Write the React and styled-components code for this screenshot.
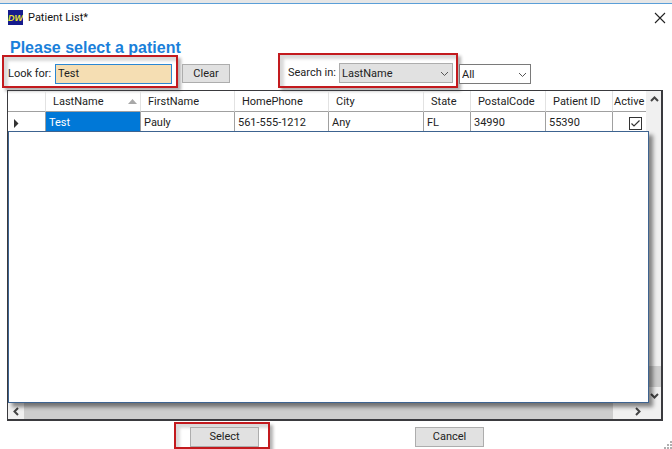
import React from "react";
import styled, { createGlobalStyle, css } from "styled-components";

const GlobalStyle = createGlobalStyle`
  *, *::before, *::after { box-sizing: border-box; }
  body { margin: 0; background: #fff; }
  body, button, input, select {
    font-family: Roboto, "Liberation Sans", sans-serif;
    font-size: 11px;
    line-height: 14px;
    color: #222;
  }
`;

const Dialog = styled.main`
  display: flex;
  flex-direction: column;
  height: 100vh;
  min-width: 600px;
  overflow: hidden;
  position: relative;
  background: #fff;
  border-top: 3px solid #e6e6e6;
`;

const TitleBar = styled.header`
  display: flex;
  align-items: center;
  gap: 5px;
  height: 30px;
  padding: 0 6px 2px 8px;
  border-top: 1px solid #5a9fd8;
`;

const AppIcon = styled.svg`
  width: 15px;
  height: 15px;
  flex: none;
`;

const Title = styled.span`
  flex: 1;
  color: #111;
`;

const CloseButton = styled.button`
  display: flex;
  width: 12px;
  height: 12px;
  padding: 0;
  border: 0;
  background: none;
`;

const Heading = styled.h1`
  margin: 6px 10px 0;
  font: bold 16px/18px "Liberation Sans", Arial, sans-serif;
  color: #1a80da;
`;

const Toolbar = styled.form`
  display: flex;
  align-items: flex-end;
  flex: none;
  height: 31px;
  padding-left: 2px;
`;

const Highlight = styled.div`
  display: flex;
  flex: none;
  align-items: center;
  gap: 2px;
  border: 2px solid #c31a1e;
  box-shadow: 3px 3px 3px rgba(0, 0, 0, 0.3), inset 4px 4px 3px rgba(0, 0, 0, 0.15);
  ${(p) =>
    p.$place === "look" &&
    css`
      width: 176px;
      height: 33px;
      padding: 4px 4px 0 4px;
    `}
  ${(p) =>
    p.$place === "search" &&
    css`
      width: 180px;
      height: 35px;
      margin-left: 48px;
      padding: 5px 3px 0 8px;
    `}
  ${(p) =>
    p.$place === "select" &&
    css`
      width: 96px;
      height: 27px;
      padding: 3px 0 0 14px;
    `}
`;

const Label = styled.label`
  flex: 1;
  white-space: nowrap;
`;

const LookInput = styled.input`
  width: 117px;
  height: 20px;
  padding: 0 2px;
  border: 1px solid #2b87d3;
  border-radius: 0;
  background: #f5deb3;
  outline: none;
`;

const Button = styled.button`
  width: ${(p) => (p.$small ? 48 : 69)}px;
  height: ${(p) => (p.$small ? 19 : 20)}px;
  flex: none;
  padding: 0;
  border: 1px solid #adadad;
  background: #e1e1e1;
`;

const ButtonSlot = styled.div`
  display: flex;
`;

const ClearSlot = styled(ButtonSlot)`
  margin: 0 0 5px 4px;
`;

const Combo = styled.span`
  display: grid;
  align-items: center;
  flex: none;
  width: ${(p) => (p.$wide ? 114 : 72)}px;
  height: 20px;
  margin: ${(p) => (p.$wide ? 0 : "0 0 4px 1px")};

  select, svg { grid-area: 1 / 1; }
  svg { justify-self: end; margin-right: 4px; pointer-events: none; }
`;

const Select = styled.select`
  appearance: none;
  width: 100%;
  height: 20px;
  padding: 1px 2px 0;
  border: 1px solid ${(p) => (p.$shaded ? "#adadad" : "#7a7a7a")};
  border-radius: 0;
  background: ${(p) => (p.$shaded ? "#e1e1e1" : "#fff")};
`;

const GridBox = styled.section`
  position: relative;
  flex: 1;
  min-height: 0;
  display: grid;
  grid-template: minmax(0, 1fr) 16px / minmax(0, 1fr) 15px;
  margin: 2px 9px 0 7px;
  border: solid #3a3a3e;
  border-width: 1px 2px 2px 1px;
`;

const TableView = styled.div`
  overflow: hidden;
`;

const Table = styled.table`
  table-layout: fixed;
  width: 652px;
  border-collapse: separate;
  border-spacing: 0;
`;

const HeadCell = styled.th`
  height: 21px;
  padding: 1px 0 0 ${(p) => (p.$tight ? 1 : 7)}px;
  border-right: 1px solid #e2e2e2;
  border-bottom: 1px solid #a0a0a0;
  font-weight: normal;
  text-align: left;
  white-space: nowrap;
`;

const HeadContent = styled.span`
  display: flex;
  align-items: center;
  justify-content: space-between;
  padding-right: 3px;
`;

const Cell = styled.td`
  height: 20px;
  padding: 2px 0 0 3px;
  border-right: 1px solid #a0a0a0;
  white-space: nowrap;
  ${(p) =>
    p.$selected &&
    css`
      background: #0078d7;
      color: #fff;
    `}
  svg { display: block; margin-left: 2px; }
`;

const Check = styled.input`
  appearance: none;
  display: block;
  width: 13px;
  height: 13px;
  margin: 0 0 0 13px;
  border: 1px solid #333;
  background: #fff;
`;

const CheckCell = styled.span`
  display: grid;
  justify-content: start;

  input, svg { grid-area: 1 / 1; }
  svg { margin: 0 0 0 13px; pointer-events: none; }
`;

const ScrollBar = styled.div`
  display: flex;
  flex-direction: ${(p) => (p.$vertical ? "column" : "row")};
  grid-column: ${(p) => (p.$vertical ? 2 : "1 / 3")};
  background: #f0f0f0;
`;

const ArrowButton = styled.button`
  display: flex;
  align-items: center;
  justify-content: center;
  width: 16px;
  height: 16px;
  flex: none;
  padding: 0;
  border: 0;
  background: none;
`;

const Track = styled.div`
  flex: 1;
  display: flex;
  flex-direction: column;
  justify-content: flex-end;
`;

const Thumb = styled.div`
  background: #cdcdcd;
  ${(p) => (p.$vertical ? "height: 21px;" : "flex: 1; margin-right: 16px;")}
`;

const Corner = styled.div`
  width: 16px;
`;

const Cover = styled.div`
  position: absolute;
  top: 40px;
  right: 12px;
  bottom: 16px;
  left: 0;
  border: 1px solid #3d6390;
  background: #fff;
  box-shadow: 4px 4px 4px rgba(0, 0, 0, 0.45);
`;

const Footer = styled.footer`
  display: flex;
  flex: none;
  justify-content: center;
  align-items: flex-end;
  gap: 145px;
  height: 28px;
  padding-right: 14px;
`;

const CancelSlot = styled(ButtonSlot)`
  margin-bottom: 2px;
`;

const Grip = styled.svg`
  position: absolute;
  right: 0;
  bottom: 0;
  width: 8px;
  height: 8px;
`;

const arrows = {
  up: "M1 6 L4.5 2.5 L8 6",
  down: "M1 3 L4.5 6.5 L8 3",
  left: "M6 1 L2.5 4.5 L6 8",
  right: "M3 1 L6.5 4.5 L3 8",
};

const Arrow = ({ dir, light }) => (
  <svg width="9" height="9" viewBox="0 0 9 9" fill="none" aria-hidden="true">
    <path d={arrows[dir]} stroke={light ? "#555" : "#444"} strokeWidth={light ? 1 : 2} />
  </svg>
);

const columns = [
  ["LastName", 95, "Test"],
  ["FirstName", 94, "Pauly"],
  ["HomePhone", 94, "561-555-1212"],
  ["City", 95, "Any"],
  ["State", 47, "FL"],
  ["PostalCode", 75, "34990"],
  ["Patient ID", 67, "55390"],
];

export default function App() {
  return (
    <>
      <GlobalStyle />
      <Dialog>
        <TitleBar>
          <AppIcon viewBox="0 0 15 15" aria-hidden="true">
            <rect width="15" height="15" fill="#151b8c" />
            <text x="7.5" y="10.5" textAnchor="middle" fontFamily="Liberation Sans, sans-serif" fontSize="9" fontWeight="bold" fontStyle="italic" fill="#e9e431">DW</text>
          </AppIcon>
          <Title>Patient List*</Title>
          <CloseButton type="button" aria-label="Close">
            <svg width="12" height="12" viewBox="0 0 12 12" aria-hidden="true">
              <path d="M1 1 L11 11 M11 1 L1 11" stroke="#222" strokeWidth="1.1" />
            </svg>
          </CloseButton>
        </TitleBar>
        <Heading>Please select a patient</Heading>
        <Toolbar onSubmit={(e) => e.preventDefault()}>
          <Highlight $place="look">
            <Label htmlFor="look">Look for:</Label>
            <LookInput id="look" type="text" defaultValue="Test" />
          </Highlight>
          <ClearSlot>
            <Button type="button" $small>Clear</Button>
          </ClearSlot>
          <Highlight $place="search">
            <Label htmlFor="field">Search in:</Label>
            <Combo $wide>
              <Select id="field" $shaded defaultValue="LastName">
                <option>LastName</option>
                <option>FirstName</option>
              </Select>
              <Arrow dir="down" light />
            </Combo>
          </Highlight>
          <Combo>
            <Select aria-label="Status" defaultValue="All">
              <option>All</option>
            </Select>
            <Arrow dir="down" light />
          </Combo>
        </Toolbar>
        <GridBox>
          <TableView>
            <Table>
              <colgroup>
                <col width="38" />
                {columns.map(([name, width]) => (
                  <col key={name} width={width} />
                ))}
                <col width="47" />
              </colgroup>
              <thead>
                <tr>
                  <HeadCell />
                  {columns.map(([name], i) => (
                    <HeadCell key={name} scope="col">
                      <HeadContent>
                        {name}
                        {i === 0 && (
                          <svg width="9" height="5" viewBox="0 0 9 5" aria-hidden="true">
                            <path d="M0 5 L4.5 0 L9 5 Z" fill="#a8a8a8" />
                          </svg>
                        )}
                      </HeadContent>
                    </HeadCell>
                  ))}
                  <HeadCell scope="col" $tight>Active</HeadCell>
                </tr>
              </thead>
              <tbody>
                <tr>
                  <Cell>
                    <svg width="6" height="9" viewBox="0 0 6 9" aria-hidden="true">
                      <path d="M1 0 L5.5 4.5 L1 9 Z" fill="#333" />
                    </svg>
                  </Cell>
                  {columns.map(([name, , value], i) => (
                    <Cell key={name} $selected={i === 0}>{value}</Cell>
                  ))}
                  <Cell>
                    <CheckCell>
                      <Check type="checkbox" aria-label="Active" defaultChecked />
                      <svg width="13" height="13" viewBox="0 0 13 13" fill="none" aria-hidden="true">
                        <path d="M2.5 6.5 L5 9 L10.5 3.5" stroke="#333" strokeWidth="1.2" />
                      </svg>
                    </CheckCell>
                  </Cell>
                </tr>
              </tbody>
            </Table>
          </TableView>
          <ScrollBar $vertical>
            <ArrowButton type="button" aria-label="Scroll up"><Arrow dir="up" /></ArrowButton>
            <Track><Thumb $vertical /></Track>
            <ArrowButton type="button" aria-label="Scroll down"><Arrow dir="down" /></ArrowButton>
          </ScrollBar>
          <ScrollBar>
            <ArrowButton type="button" aria-label="Scroll left"><Arrow dir="left" /></ArrowButton>
            <Thumb />
            <ArrowButton type="button" aria-label="Scroll right"><Arrow dir="right" /></ArrowButton>
            <Corner />
          </ScrollBar>
          <Cover />
        </GridBox>
        <Footer>
          <Highlight $place="select">
            <Button type="button">Select</Button>
          </Highlight>
          <CancelSlot>
            <Button type="button">Cancel</Button>
          </CancelSlot>
        </Footer>
        <Grip viewBox="0 0 8 8" aria-hidden="true" fill="#b0b0b0">
          <path d="M6 0h2v2H6z M3 3h2v2H3z M6 3h2v2H6z M0 6h2v2H0z M3 6h2v2H3z M6 6h2v2H6z" />
        </Grip>
      </Dialog>
    </>
  );
}
